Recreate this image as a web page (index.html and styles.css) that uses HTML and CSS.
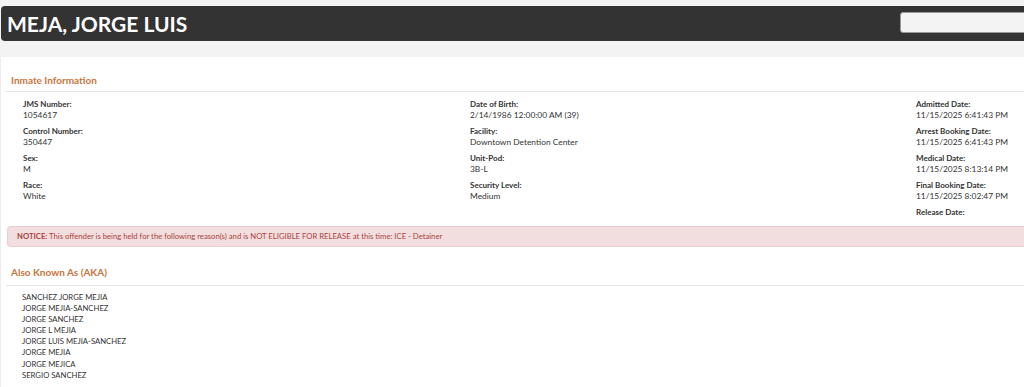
FILE: index.html
```html
<html>
  <head>
    <link rel="stylesheet" href="styles.css">
  </head>

  <body>

    <header class="topbar">
      <h1 class="topbar-name">MEJA, JORGE LUIS</h1>
      <input class="topbar-search" type="text">
    </header>

    <main class="panel">
      <section class="block">
        <h2 class="block-title">Inmate Information</h2>
        <div class="info-grid">
          <div class="info-col">
            <div class="field"><div class="field-label">JMS Number:</div><div class="field-value">1054617</div></div>
            <div class="field"><div class="field-label">Control Number:</div><div class="field-value">350447</div></div>
            <div class="field"><div class="field-label">Sex:</div><div class="field-value">M</div></div>
            <div class="field"><div class="field-label">Race:</div><div class="field-value">White</div></div>
          </div>
          <div class="info-col">
            <div class="field"><div class="field-label">Date of Birth:</div><div class="field-value">2/14/1986 12:00:00 AM (39)</div></div>
            <div class="field"><div class="field-label">Facility:</div><div class="field-value">Downtown Detention Center</div></div>
            <div class="field"><div class="field-label">Unit-Pod:</div><div class="field-value">3B-L</div></div>
            <div class="field"><div class="field-label">Security Level:</div><div class="field-value">Medium</div></div>
          </div>
          <div class="info-col">
            <div class="field"><div class="field-label">Admitted Date:</div><div class="field-value">11/15/2025 6:41:43 PM</div></div>
            <div class="field"><div class="field-label">Arrest Booking Date:</div><div class="field-value">11/15/2025 6:41:43 PM</div></div>
            <div class="field"><div class="field-label">Medical Date:</div><div class="field-value">11/15/2025 8:13:14 PM</div></div>
            <div class="field"><div class="field-label">Final Booking Date:</div><div class="field-value">11/15/2025 8:02:47 PM</div></div>
            <div class="field"><div class="field-label">Release Date:</div><div class="field-value"></div></div>
          </div>
        </div>
        <div class="notice"><b>NOTICE:</b> This offender is being held for the following reason(s) and is NOT ELIGIBLE FOR RELEASE at this time: ICE - Detainer</div>
      </section>

      <section class="block">
        <h2 class="block-title">Also Known As (AKA)</h2>
        <ul class="aka-list">
          <li>SANCHEZ JORGE MEJIA</li>
          <li>JORGE MEJIA-SANCHEZ</li>
          <li>JORGE SANCHEZ</li>
          <li>JORGE L MEJIA</li>
          <li>JORGE LUIS MEJIA-SANCHEZ</li>
          <li>JORGE MEJIA</li>
          <li>JORGE MEJICA</li>
          <li>SERGIO SANCHEZ</li>
        </ul>
      </section>
    </main>

  </body>
</html>
```

FILE: styles.css
```css
body {
  margin: 0;
  background-color: #f3f3f3;
  font-family: Lato, "Open Sans", sans-serif;
  color: #333;
  overflow: hidden;
}

/* dark name bar */
.topbar {
  display: flex;
  align-items: flex-start;
  justify-content: space-between;
  margin: 6px 0 0 1px;
  height: 35px;
  background-color: #333;
  border-radius: 4px 0 0 4px;
}
.topbar-name {
  margin: 0;
  padding-left: 6px;
  font-size: 21px; font-weight: bold;
  line-height: 36px;
  color: #fff;
}
.topbar-search {
  margin: 6px -12px 0 0;
  width: 136px; height: 21px;
  box-sizing: border-box;
  border: 1px solid #999;
  border-radius: 3px;
  background-color: #f3f3f3;
}

/* white content panel */
.panel {
  margin-top: 16px;
  padding: 15px 0 12px 5px;
  min-height: 320px;
  background-color: #fff;
  border-left: 1px solid #ececec;
}
.block-title {
  margin: 0;
  padding: 0 0 2px 5px;
  font-size: 10px; font-weight: bold;
  line-height: 17px;
  color: #c8763e;
  border-bottom: 1px solid #e4e4e4;
}

.info-grid {
  display: grid;
  grid-template-columns: 447px 446px 447px;
  margin: 7px 0 0 17px;
}
.field {
  margin-bottom: 5px;
  font-size: 8.4px;
  line-height: 11px;
}
.field-label { font-weight: bold; font-size: 8px; }

.notice {
  margin: 3px 0 0 1px;
  padding: 0 9px;
  height: 21px;
  box-sizing: border-box;
  font-size: 7.7px;
  line-height: 19px;
  color: #a94442;
  background-color: #f2dede;
  border: 1px solid #ebccd1;
  border-right: none;
  border-radius: 4px 0 0 4px;
}

.block + .block { margin-top: 17px; }
.block + .block .block-title { padding-bottom: 4px; }

.aka-list {
  list-style: none;
  margin: 6px 0 0 16px;
  padding: 0;
  font-size: 7.7px;
  line-height: 11.1px;
}
```
